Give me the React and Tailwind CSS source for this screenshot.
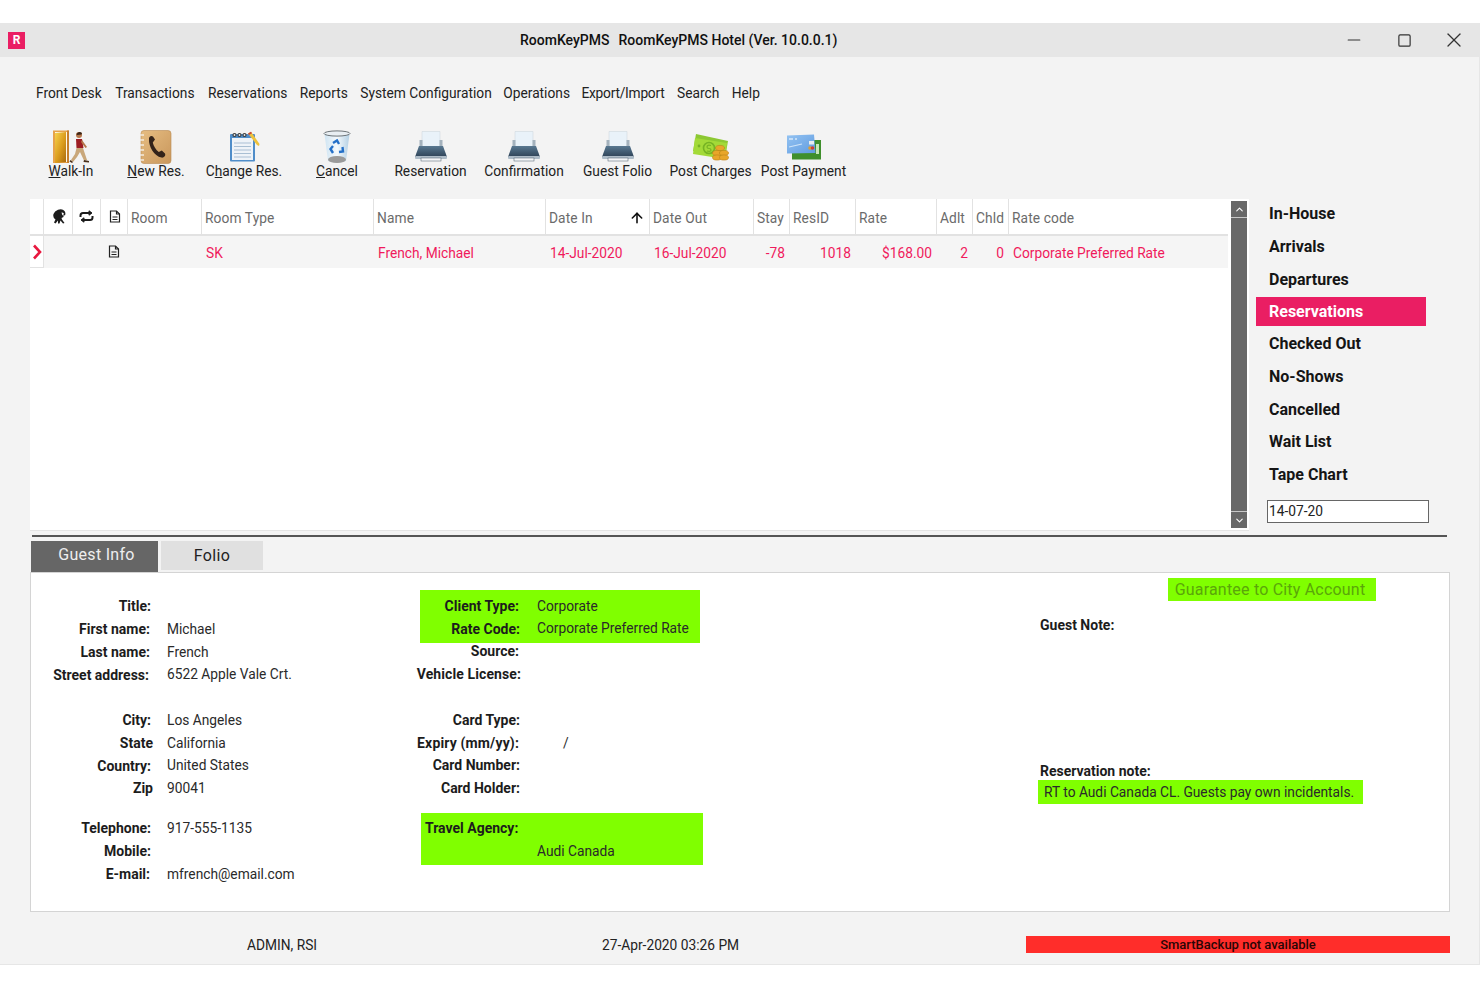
import { ArrowUp, ChevronUp, ChevronDown, Minus, Square, X } from 'lucide-react';

const menuItems = [
    { label: 'Front Desk', className: 'mr-[1px]' },
    { label: 'Transactions', className: 'mr-[1px]' },
    { label: 'Reservations', className: '' },
    { label: 'Reports', className: '' },
    { label: 'System Configuration', className: '-mr-[1px]' },
    { label: 'Operations', className: '-mr-[1px]' },
    { label: 'Export/Import', className: 'tracking-[-0.25px]' },
    { label: 'Search', className: '' },
    { label: 'Help', className: '' },
];

const WalkInIcon = () => (
    <svg width="38" height="34" viewBox="0 0 38 34">
        <defs>
            <linearGradient id="doorFill" x1="0" y1="0" x2="1" y2="1">
                <stop offset="0" stopColor="#f7d24a" />
                <stop offset="0.55" stopColor="#d99a1c" />
                <stop offset="1" stopColor="#a8690f" />
            </linearGradient>
        </defs>
        <rect x="1" y="0.5" width="16" height="32.5" fill="#e6a24a" />
        <rect x="3" y="2" width="12" height="30" fill="#fff7e8" />
        <path d="M3 3 L14 2 L14 32 L3 33 Z" fill="url(#doorFill)" />
        <rect x="15" y="0.5" width="2" height="32.5" fill="#c77f2c" />
        <circle cx="27" cy="5" r="3" fill="#b5764a" />
        <path d="M24.5 4 Q27 0.5 30 3 L29.5 4.5 L25 5 Z" fill="#3a2417" />
        <path d="M24 9 L30 9 L31.5 18 L24.5 18 Z" fill="#9c1c22" />
        <path d="M30 10 L35 17 L33.5 18 L29 12 Z" fill="#b5764a" />
        <path d="M24.5 18 L31 18 L35 30 L32 30.5 L28 22 L25 27 L21 32 L19 30 L23 24 Z" fill="#c9a77a" />
        <path d="M32 30 L37 31 L37 32.5 L31.5 32 Z M18.5 30 L21 32 L20 33 L17.5 31.5 Z" fill="#4a2f1a" />
    </svg>
);

const NewResIcon = () => (
    <svg width="32" height="34" viewBox="0 0 32 34">
        <defs>
            <linearGradient id="bookFill" x1="0" y1="0" x2="1" y2="1">
                <stop offset="0" stopColor="#e6bd82" />
                <stop offset="1" stopColor="#c9975c" />
            </linearGradient>
        </defs>
        <rect x="1" y="0.5" width="30" height="33" rx="3" fill="url(#bookFill)" stroke="#b98a52" strokeWidth="0.6" />
        <path d="M0 5 h4 M0 10 h4 M0 15 h4 M0 20 h4 M0 25 h4 M0 30 h4" stroke="#f4ecdf" strokeWidth="1.6" />
        <path d="M9 9 C8.5 7 11 5 13 6.5 L15 9.5 L12.8 12.5 C13.5 16 16 20 18.8 22 L21.8 20.5 L25 23.5 C26 25.5 24 28 21.5 27.6 C14 26 8.5 16.5 9 9 Z" fill="#33231a" />
    </svg>
);

const ChangeResIcon = () => (
    <svg width="31" height="31" viewBox="0 0 31 31">
        <rect x="1" y="3" width="25" height="27.5" rx="1" fill="#4f8dc9" />
        <rect x="3" y="7" width="21" height="22" fill="#eef3f8" />
        <path d="M5 12 h17 M5 15.5 h17 M5 19 h17 M5 22.5 h17 M5 26 h17" stroke="#a9bfd3" strokeWidth="1.2" />
        <circle cx="5.5" cy="4" r="2.1" fill="#3b3b3b" />
        <circle cx="10.5" cy="4" r="2.1" fill="#3b3b3b" />
        <circle cx="15.5" cy="4" r="2.1" fill="#3b3b3b" />
        <circle cx="5.5" cy="4" r="0.9" fill="#e8e8e8" />
        <circle cx="10.5" cy="4" r="0.9" fill="#e8e8e8" />
        <circle cx="15.5" cy="4" r="0.9" fill="#e8e8e8" />
        <path d="M19 2.5 L22 0.8 L30.5 13 L30 15 L28 14 Z" fill="#eec23c" />
        <path d="M19 2.5 L22 0.8 L23 2.3 L20 4 Z" fill="#c8463c" />
    </svg>
);

const CancelIcon = () => (
    <svg width="28" height="34" viewBox="0 0 28 34">
        <defs>
            <linearGradient id="binFill" x1="0" y1="0" x2="1" y2="0">
                <stop offset="0" stopColor="#cfe4f2" />
                <stop offset="0.5" stopColor="#f4f9fc" />
                <stop offset="1" stopColor="#b4d0e4" />
            </linearGradient>
        </defs>
        <path d="M1.5 4 L26.5 4 L23 31 Q14 34 5 31 Z" fill="url(#binFill)" />
        <ellipse cx="14" cy="3.5" rx="13" ry="2.6" fill="#e8eef2" stroke="#6d7478" strokeWidth="1" />
        <ellipse cx="14" cy="29.5" rx="9" ry="3.6" fill="#9a9a9a" />
        <path d="M10 13 L14 10.5 L16 14 M19.5 17 L20 21.5 L16 22 M10 23 L7.5 19 L10 16" fill="none" stroke="#2470c8" strokeWidth="2.4" />
    </svg>
);

const PrinterIcon = ({ id }) => (
    <svg width="34" height="31" viewBox="0 0 34 31">
        <defs>
            <linearGradient id={id} x1="0" y1="0" x2="0" y2="1">
                <stop offset="0" stopColor="#587891" />
                <stop offset="1" stopColor="#2f4357" />
            </linearGradient>
        </defs>
        <path d="M8 0.5 L26 0.5 L26 17 L8 17 Z" fill="#e9f2f9" stroke="#c9d3da" strokeWidth="0.5" />
        <path d="M5.5 9 L8.5 9 L8.5 16 L5.5 16 Z M25.5 9 L28.5 9 L28.5 16 L25.5 16 Z" fill="#a4b2bd" />
        <path d="M5 15 L29 15 L33 26 L1 26 Z" fill={`url(#${id})`} />
        <rect x="1" y="25" width="32" height="3" rx="1" fill="#aebcc8" />
        <rect x="7" y="27" width="20" height="3" fill="#f4f6f8" stroke="#4a5a68" strokeWidth="0.5" />
    </svg>
);

const PostChargesIcon = () => (
    <svg width="36" height="28" viewBox="0 0 36 28">
        <path d="M3 1 L35 8 L32 25 L0 18 Z" fill="#8cc832" />
        <path d="M2 5 L34 10 L32 26 L0 21 Z" fill="#a3da38" />
        <circle cx="16" cy="15" r="5.5" fill="none" stroke="#76b324" strokeWidth="1.6" />
        <path d="M18 12.5 Q14 11.5 14 14 Q14 15.5 16 15.5 Q18 15.5 18 17 Q18 19 14 18" fill="none" stroke="#76b324" strokeWidth="1.2" />
        <circle cx="6" cy="13" r="1.4" fill="#76b324" />
        <g fill="#e8a62a" stroke="#bd7f16" strokeWidth="0.6">
            <ellipse cx="27" cy="15" rx="4.5" ry="2.6" />
            <ellipse cx="24" cy="20" rx="4.5" ry="2.6" />
            <ellipse cx="31" cy="20" rx="4.5" ry="2.6" />
            <ellipse cx="24" cy="24.5" rx="4.5" ry="2.6" />
            <ellipse cx="31" cy="24.5" rx="4.5" ry="2.6" />
        </g>
    </svg>
);

const PostPaymentIcon = () => (
    <svg width="36" height="26" viewBox="0 0 36 26">
        <defs>
            <linearGradient id="cardFill" x1="0" y1="0" x2="1" y2="1">
                <stop offset="0" stopColor="#94c3f2" />
                <stop offset="1" stopColor="#5f9be0" />
            </linearGradient>
        </defs>
        <rect x="6" y="6" width="29" height="19.5" fill="#3f8f2c" />
        <rect x="30" y="10" width="3" height="10" fill="#c8e6b8" />
        <path d="M1 1.5 L28 0.5 L29.5 19 L1 19.5 Z" fill="url(#cardFill)" />
        <path d="M3 5 h4 M9 5 h2" stroke="#ffffff" strokeWidth="1.2" />
        <path d="M3 13 L16 10" stroke="#cfe4f8" strokeWidth="1.2" />
        <rect x="23" y="7" width="5" height="3.5" fill="#e8eef0" />
        <circle cx="24" cy="14" r="1.8" fill="#e0a030" />
        <circle cx="26.5" cy="14" r="1.8" fill="#d04030" />
    </svg>
);

const toolbarItems = [
    { pre: '', key: 'W', post: 'alk-In', icon: <WalkInIcon />, width: 'w-[86px]' },
    { pre: '', key: 'N', post: 'ew Res.', icon: <NewResIcon />, width: 'w-[84px]' },
    { pre: 'C', key: 'h', post: 'ange Res.', icon: <ChangeResIcon />, width: 'w-[92px]' },
    { pre: '', key: 'C', post: 'ancel', icon: <CancelIcon />, width: 'w-[94px]' },
    { pre: 'Reservation', key: '', post: '', icon: <PrinterIcon id="printerA" />, width: 'w-[93px]' },
    { pre: 'Confirmation', key: '', post: '', icon: <PrinterIcon id="printerB" />, width: 'w-[94px]' },
    { pre: 'Guest Folio', key: '', post: '', icon: <PrinterIcon id="printerC" />, width: 'w-[93px]' },
    { pre: 'Post Charges', key: '', post: '', icon: <PostChargesIcon />, width: 'w-[93px]' },
    { pre: 'Post Payment', key: '', post: '', icon: <PostPaymentIcon />, width: 'w-[93px]' },
];

const NoteIcon = () => (
    <svg width="12" height="13" viewBox="0 0 12 13" fill="none" stroke="#222" strokeWidth="1.2">
        <path d="M1.5 1 H7.5 L10.5 4 V12 H1.5 Z" />
        <path d="M7.5 1 V4 H10.5 M3.5 7 H8.5 M3.5 9.5 H8.5" />
    </svg>
);

const PersonIcon = () => (
    <svg width="15" height="15" viewBox="0 0 15 15">
        <path d="M6 0.8 Q10.5 -0.5 12.5 2 Q14 4 13 6.5 L11.5 6 L11.5 8 L9.5 9 L10 10.5 L12.5 14 L11 14.5 L8.5 11.5 L7.5 14.5 L6 14.5 L6 11.5 L3.5 14.5 L2 13.5 L3.5 10.5 Q0.5 8.5 1.5 5 Q2.5 2 6 0.8 Z" fill="#1c1c1c" />
        <path d="M9.5 3.5 Q11.5 3 12 5 L10.5 6.5 Z" fill="#ffffff" />
    </svg>
);

const RepeatIcon = () => (
    <svg width="15" height="13" viewBox="0 0 15 13" fill="none" stroke="#1c1c1c" strokeWidth="2">
        <path d="M1.5 7 V5.5 Q1.5 3 4 3 H12" />
        <path d="M13.5 6 V7.5 Q13.5 10 11 10 H3" />
        <path d="M10 0.8 L13 3 L10 5.2 Z" fill="#1c1c1c" strokeWidth="1" />
        <path d="M5 7.8 L2 10 L5 12.2 Z" fill="#1c1c1c" strokeWidth="1" />
    </svg>
);

const headers = ['Room', 'Room Type', 'Name'];

const Row = ({ label, value, labelClass = '' }) => (
    <div className="flex h-[22.75px] items-center whitespace-nowrap">
        <div className="flex w-[120px] shrink-0 justify-end">
            <span className={`text-sm font-bold text-[#1c1c1c] ${labelClass}`}>{label}</span>
        </div>
        <div className="ml-[16px] text-[#2a2a2a]">{value}</div>
    </div>
);

const MidRow = ({ label, value, valueClass = 'ml-[17px]', labelClass = '' }) => (
    <div className="flex h-[22.75px] items-center whitespace-nowrap">
        <div className="flex w-[100px] shrink-0 justify-end">
            <span className={`text-sm font-bold text-[#1c1c1c] ${labelClass}`}>{label}</span>
        </div>
        <div className={`text-[#2a2a2a] ${valueClass}`}>{value}</div>
    </div>
);

export default function App() {
    return (
        <div className="h-[987px] w-[1480px] overflow-hidden bg-white pt-[23px] font-[Roboto,sans-serif] text-[13.75px] text-[#222]">
            <div className="h-[942px] border-r border-b border-[#e6e6e6] bg-[#f3f3f3]">
                {/* title bar */}
                <div className="flex h-[34px] items-center bg-[#e6e6e6]">
                    <div className="ml-[8px] flex h-[17px] w-[17px] items-center justify-center bg-[#ea1e63] text-[12px] font-bold leading-none text-white">R</div>
                    <div className="ml-[495px] flex gap-[9px] whitespace-nowrap text-sm font-medium text-[#111]">
                        <span>RoomKeyPMS</span>
                        <span>RoomKeyPMS Hotel (Ver. 10.0.0.1)</span>
                    </div>
                    <div className="ml-auto flex w-[150px] items-center text-[#333]">
                        <div className="flex w-[50px] justify-center"><Minus size={20} strokeWidth={1.3} /></div>
                        <div className="flex w-[50px] justify-center"><Square size={15} strokeWidth={1.9} /></div>
                        <div className="flex w-[50px] justify-center"><X size={24} strokeWidth={1.3} /></div>
                    </div>
                </div>

                {/* menu */}
                <div className="mt-[25px] flex h-[22px] items-center gap-[12.5px] pl-[36px] text-[#222]">
                    {menuItems.map((item) => (
                        <span key={item.label} className={item.className}>{item.label}</span>
                    ))}
                </div>

                {/* toolbar */}
                <div className="mt-[26px] flex h-[50px] pl-[28px]">
                    {toolbarItems.map((item) => (
                        <div key={item.pre + item.post} className={`flex flex-col items-center ${item.width}`}>
                            <div className="flex h-[33px] items-center justify-center">{item.icon}</div>
                            <div className="whitespace-nowrap leading-[16px]">
                                {item.pre}
                                {item.key && <span className="underline">{item.key}</span>}
                                {item.post}
                            </div>
                        </div>
                    ))}
                </div>

                {/* grid and side list */}
                <div className="mt-[19px] flex pl-[30px]">
                    <div className="flex h-[332px] w-[1219px] border-b border-[#e4e4e4] bg-white">
                        <div className="w-[1198px]">
                            <div className="grid h-[37px] grid-cols-[14px_29px_28px_27px_74px_172px_172px_104px_104px_36px_66px_81px_36px_36px_219px] border-b-2 border-[#e2e2e2] tracking-[0.1px] text-[#6b6b6b]">
                                <div className="border-r border-[#e2e2e2]" />
                                <div className="flex items-center justify-center border-r border-[#e2e2e2] pl-[2px]"><PersonIcon /></div>
                                <div className="flex items-center justify-center border-r border-[#e2e2e2]"><RepeatIcon /></div>
                                <div className="flex items-center justify-center border-r border-[#e2e2e2] pl-[2px]"><NoteIcon /></div>
                                {headers.map((h) => (
                                    <div key={h} className="flex items-center border-r border-[#e2e2e2] pl-[3px] pt-[3px]">{h}</div>
                                ))}
                                <div className="flex items-center justify-between border-r border-[#e2e2e2] pl-[3px] pr-[4px] pt-[3px]">
                                    Date In
                                    <ArrowUp size={16} strokeWidth={2.4} className="text-[#111]" />
                                </div>
                                <div className="flex items-center border-r border-[#e2e2e2] pl-[3px] pt-[3px]">Date Out</div>
                                <div className="flex items-center border-r border-[#e2e2e2] pl-[3px] pt-[3px]">Stay</div>
                                <div className="flex items-center border-r border-[#e2e2e2] pl-[3px] pt-[3px]">ResID</div>
                                <div className="flex items-center border-r border-[#e2e2e2] pl-[3px] pt-[3px]">Rate</div>
                                <div className="flex items-center border-r border-[#e2e2e2] pl-[3px] pt-[3px]">Adlt</div>
                                <div className="flex items-center border-r border-[#e2e2e2] pl-[3px] pt-[3px]">Chld</div>
                                <div className="flex items-center pl-[3px] pt-[3px]">Rate code</div>
                            </div>
                            <div className="grid h-[32px] grid-cols-[14px_29px_28px_27px_74px_172px_172px_104px_104px_36px_66px_81px_36px_36px_219px] items-center bg-[#f5f5f5] text-[#f01a5c]">
                                <div className="flex h-full items-center justify-center border-r border-b border-[#e2e2e2] bg-white">
                                    <svg width="10" height="16" viewBox="0 0 10 16" fill="none" stroke="#e8183f" strokeWidth="2.6"><path d="M2 1.5 L8 8 L2 14.5" /></svg>
                                </div>
                                <div />
                                <div />
                                <div className="flex justify-center pb-[2px] pr-[2px]"><NoteIcon /></div>
                                <div />
                                <div className="pl-[4px] pt-[2px]">SK</div>
                                <div className="pl-[4px] pt-[2px]">French, Michael</div>
                                <div className="pl-[4px] pt-[2px]">14-Jul-2020</div>
                                <div className="pl-[4px] pt-[2px]">16-Jul-2020</div>
                                <div className="pr-[5px] pt-[2px] text-right">-78</div>
                                <div className="pr-[5px] pt-[2px] text-right">1018</div>
                                <div className="pr-[5px] pt-[2px] text-right">$168.00</div>
                                <div className="pr-[5px] pt-[2px] text-right">2</div>
                                <div className="pr-[5px] pt-[2px] text-right">0</div>
                                <div className="pl-[4px] pt-[2px]">Corporate Preferred Rate</div>
                            </div>
                        </div>
                        <div className="mb-[2px] ml-[3px] mt-[2px] flex w-[16px] flex-col bg-[#686868] text-white">
                            <div className="flex h-[17px] items-center justify-center border-b border-[#c8c8c8]"><ChevronUp size={11} strokeWidth={2.4} /></div>
                            <div className="flex-1" />
                            <div className="flex h-[17px] items-center justify-center border-t border-[#c8c8c8]"><ChevronDown size={11} strokeWidth={2.4} /></div>
                        </div>
                    </div>

                    <div className="ml-[7px] flex w-[170px] flex-col gap-[3.5px] pt-[0.5px] text-base font-bold text-[#151515]">
                        <div className="flex h-[29px] items-center pl-[13px]">In-House</div>
                        <div className="flex h-[29px] items-center pl-[13px]">Arrivals</div>
                        <div className="flex h-[29px] items-center pl-[13px] pt-[1px]">Departures</div>
                        <div className="flex h-[29px] items-center bg-[#ea1e63] pl-[13px] text-white">Reservations</div>
                        <div className="flex h-[29px] items-center pl-[13px]">Checked Out</div>
                        <div className="flex h-[29px] items-center pl-[13px]">No-Shows</div>
                        <div className="flex h-[29px] items-center pl-[13px] pt-[1px]">Cancelled</div>
                        <div className="flex h-[29px] items-center pl-[13px]">Wait List</div>
                        <div className="flex h-[29px] items-center pl-[13px] pt-[1px]">Tape Chart</div>
                        <input
                            readOnly
                            defaultValue="14-07-20"
                            className="ml-[11px] mt-[8px] h-[23px] w-[162px] border border-[#666] bg-white pb-[2px] pl-[1px] text-[13.75px] font-normal text-[#222] outline-none"
                        />
                    </div>
                </div>

                {/* divider */}
                <div className="ml-[32px] mt-[4px] h-[2px] w-[1415px] bg-[#555]" />

                {/* tabs */}
                <div className="ml-[31px] mt-[4px] flex h-[31px] items-start gap-[3px] text-base">
                    <div className="flex h-[31px] w-[127px] items-center justify-center bg-[#666] pb-[4px] pl-[4px] tracking-[0.3px] text-[#eee]">Guest Info</div>
                    <div className="flex h-[29px] w-[102px] items-center justify-center bg-[#e0e0e0] tracking-[0.4px] text-[#222]">Folio</div>
                </div>

                {/* guest panel */}
                <div className="ml-[30px] flex h-[340px] w-[1420px] border border-[#d4d4d4] bg-white">
                    <div className="w-[369px] pt-[22px]">
                        <Row label="Title:" />
                        <Row label="First name:" value="Michael" labelClass="mr-[1px]" />
                        <Row label="Last name:" value="French" labelClass="mr-[1px]" />
                        <Row label="Street address:" value="6522 Apple Vale Crt." labelClass="mr-[2px]" />
                        <div className="h-[22.75px]" />
                        <Row label="City:" value="Los Angeles" />
                        <Row label="State" value="California" labelClass="-mr-[2px]" />
                        <Row label="Country:" value="United States" />
                        <Row label="Zip" value="90041" labelClass="-mr-[2px]" />
                        <div className="h-[17.25px]" />
                        <Row label="Telephone:" value="917-555-1135" />
                        <Row label="Mobile:" />
                        <Row label="E-mail:" value="mfrench@email.com" labelClass="mr-[1px]" />
                    </div>

                    <div className="w-[619px] pl-[20px] pt-[17px]">
                        <div className="w-[280px] bg-[#80ff00] pb-[3px] pt-[4.5px]">
                            <MidRow label="Client Type:" value="Corporate" labelClass="mr-[1px]" />
                            <MidRow label="Rate Code:" value="Corporate Preferred Rate" />
                        </div>
                        <div className="-mt-[3px]">
                            <MidRow label="Source:" labelClass="mr-[1px]" />
                            <MidRow label="Vehicle License:" labelClass="-mr-[1px] tracking-[0.1px]" />
                            <div className="h-[22.75px]" />
                            <MidRow label="Card Type:" />
                            <div className="pt-[0.5px]">
                                <MidRow label="Expiry (mm/yy):" value="/" valueClass="ml-[43px]" labelClass="mr-[1px] tracking-[0.15px]" />
                            </div>
                            <div className="-mt-[0.5px]">
                                <MidRow label="Card Number:" />
                            </div>
                            <MidRow label="Card Holder:" />
                        </div>
                        <div className="ml-[1px] mt-[13.5px] h-[52px] w-[282px] bg-[#80ff00] pt-[3.5px]">
                            <div className="flex h-[22.75px] items-center pl-[4px] text-sm font-bold text-[#1c1c1c]">Travel Agency:</div>
                            <div className="flex h-[23.5px] items-center pl-[116px] pt-[1px] text-[#2a2a2a]">Audi Canada</div>
                        </div>
                    </div>

                    <div className="flex-1 pt-[5px]">
                        <div className="ml-[149px] flex h-[23px] w-[208px] items-center justify-center bg-[#80ff00] pr-[4px] text-base tracking-[0.2px] text-[#5aa60a]">Guarantee to City Account</div>
                        <div className="ml-[21px] mt-[13px] h-[22px] text-sm font-bold leading-[22px] text-[#1c1c1c]">Guest Note:</div>
                        <div className="ml-[21px] mt-[124px] h-[22px] text-sm font-bold leading-[22px] text-[#1c1c1c]">Reservation note:</div>
                        <div className="ml-[19px] -mt-[2px] flex h-[24px] w-[325px] items-center bg-[#80ff00] pl-[6px] text-[#2a2a2a]">RT to Audi Canada CL. Guests pay own incidentals.</div>
                    </div>
                </div>

                {/* status bar */}
                <div className="mt-[24px] flex h-[17px] items-center pl-[247px]">
                    <div className="w-[355px] pt-[2px] text-[#222]">ADMIN, RSI</div>
                    <div className="w-[424px] pt-[2px] text-[#222]">27-Apr-2020 03:26 PM</div>
                    <div className="flex h-[17px] w-[424px] items-center justify-center bg-[#ff2d2a] text-[13px] font-medium text-[#2a0505]">SmartBackup not available</div>
                </div>
            </div>
        </div>
    );
}
